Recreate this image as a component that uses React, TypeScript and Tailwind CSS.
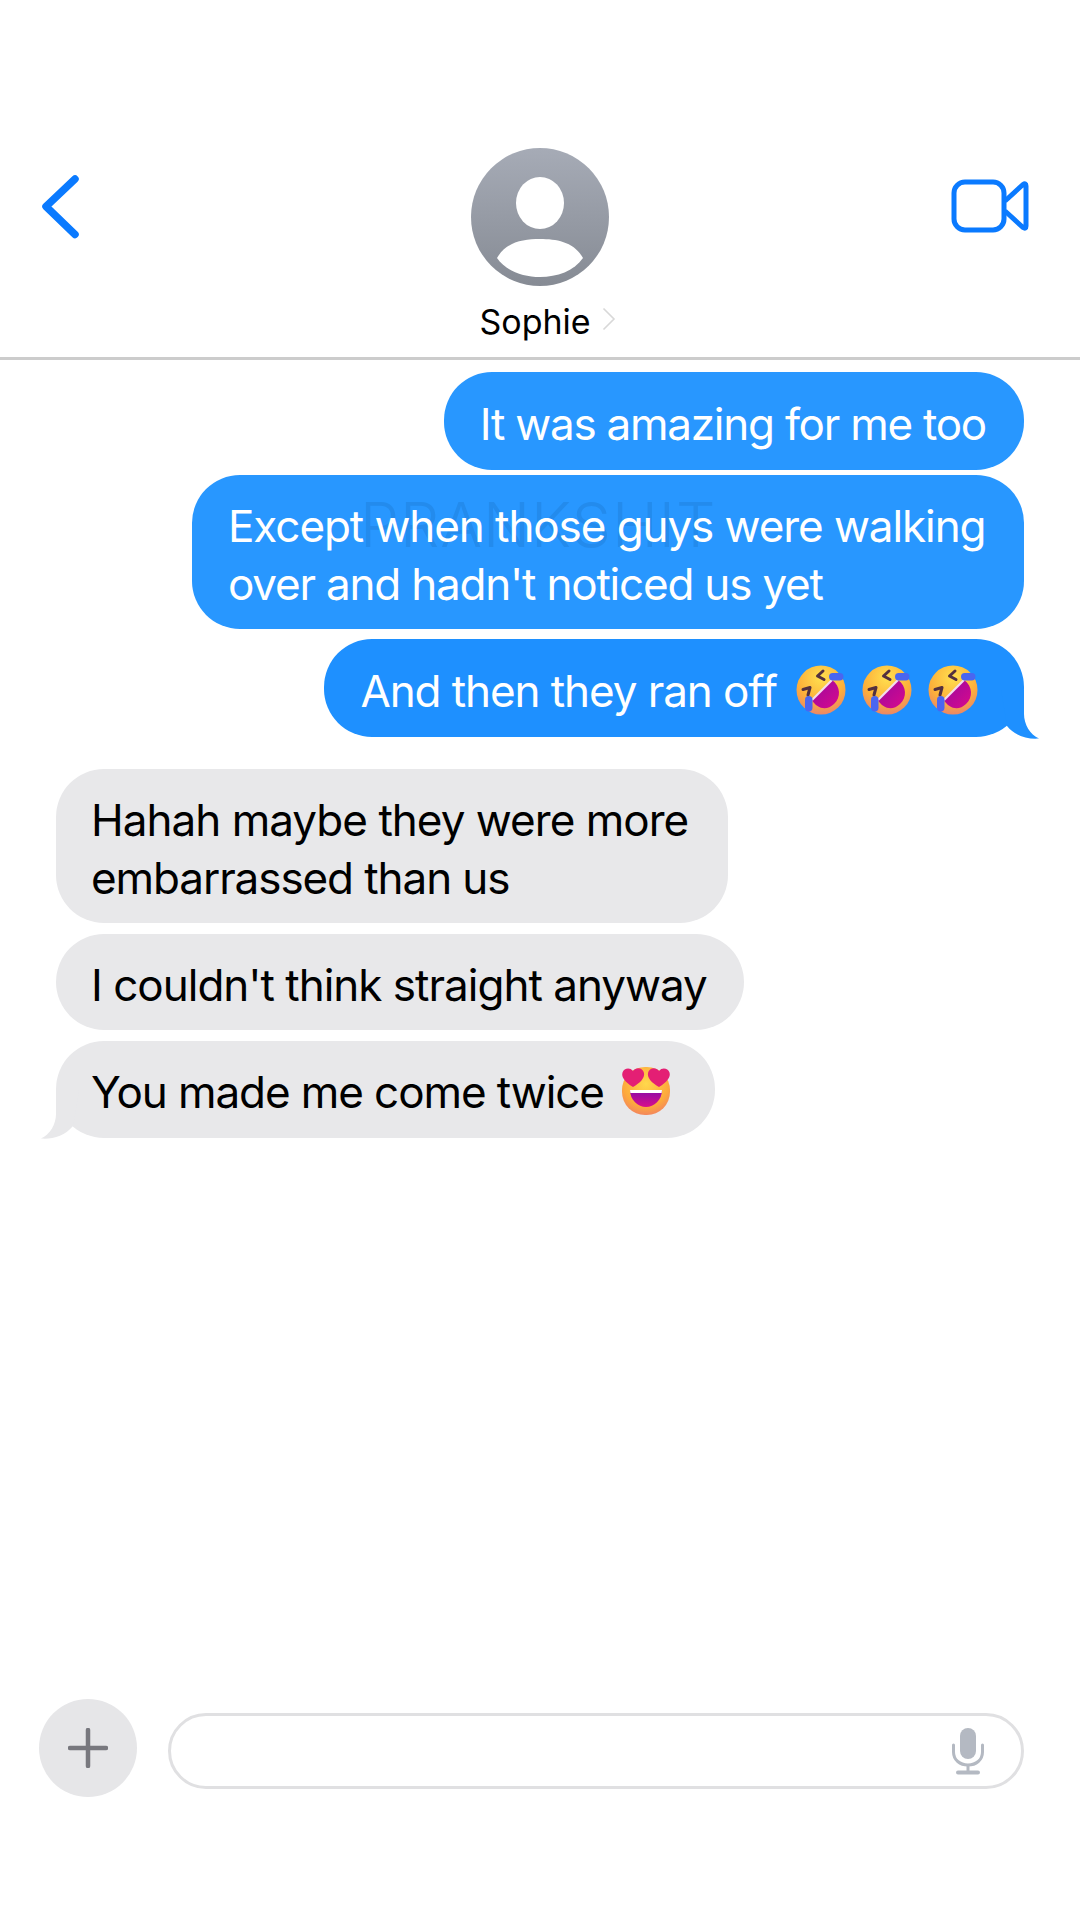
import React from "react";

function Rofl({ id }: { id: string }) {
  return (
    <svg width="50" height="50" viewBox="0 0 50 50" className="shrink-0">
      <defs>
        <radialGradient id={`f${id}`} cx="0.5" cy="0.25" r="0.8">
          <stop offset="0" stopColor="#ffe04f" />
          <stop offset="0.6" stopColor="#fdb03a" />
          <stop offset="1" stopColor="#e8806e" />
        </radialGradient>
        <linearGradient id={`m${id}`} x1="0" y1="0" x2="1" y2="1">
          <stop offset="0" stopColor="#9a08a0" />
          <stop offset="1" stopColor="#d80a8c" />
        </linearGradient>
      </defs>
      <circle cx="25" cy="25" r="24.5" fill={`url(#f${id})`} />
      <path d="M36 15 C45 21 45 33 38 39 C31 46 21 44 16 35 Z" fill={`url(#m${id})`} />
      <path d="M16 35 L36 15" stroke="#f3dcef" strokeWidth="2.2" />
      <path d="M27 6 L21.5 11 L28 14.5" fill="none" stroke="#53303f" strokeWidth="3" strokeLinecap="round" strokeLinejoin="round" />
      <path d="M7 24.5 L14 22.5 L12 30" fill="none" stroke="#53303f" strokeWidth="3" strokeLinecap="round" strokeLinejoin="round" />
      <rect x="33" y="8" width="14.5" height="7.5" rx="3.7" fill="#4a66f0" />
      <rect x="9" y="31" width="7.5" height="15.5" rx="3.7" fill="#4a66f0" />
    </svg>
  );
}

function HeartEyes() {
  return (
    <svg width="50" height="50" viewBox="0 0 50 50" className="shrink-0">
      <defs>
        <radialGradient id="hf" cx="0.5" cy="0.35" r="0.72">
          <stop offset="0" stopColor="#ffd84c" />
          <stop offset="0.65" stopColor="#fdaa3c" />
          <stop offset="1" stopColor="#f07a68" />
        </radialGradient>
        <linearGradient id="hm" x1="0" y1="0" x2="0" y2="1">
          <stop offset="0" stopColor="#8a0ca8" />
          <stop offset="1" stopColor="#d80d8c" />
        </linearGradient>
      </defs>
      <rect x="1" y="1" width="48" height="48" rx="23" fill="url(#hf)" />
      <path d="M9 24 H41 C41 34 33 41 25 41 C17 41 9 34 9 24 Z" fill="url(#hm)" />
      <path d="M9 24 H41 L40.6 27 H9.4 Z" fill="#ffffff" />
      <path d="M12 21 C4 16 0 11 1.5 6.5 C3 2 9 1 12 5 C15 0.5 22 1.5 23 7 C24 12 19 17 12 21 Z" fill="#e41f74" />
      <path d="M38 21 C31 17 26 12 27 7 C28 1.5 35 0.5 38 5 C41 1 47 2 48.5 6.5 C50 11 46 16 38 21 Z" fill="#e41f74" />
    </svg>
  );
}

const sent = "bg-[#2897ff] text-white self-end rounded-[48px] pl-[36px] pr-[38px] pt-[23px] pb-[17px]";
const recv = "bg-[#e8e8ea] text-black self-start rounded-[48px] pl-[35px] pt-[22px] pb-[16px]";

export default function App() {
  return (
    <div className="w-[1080px] h-[1920px] bg-white flex flex-col overflow-hidden font-['Inter','Liberation_Sans',sans-serif] text-[44px] leading-[58px] tracking-[-1.08px]">
      {/* Header */}
      <header className="h-[360px] pt-[148px] border-b-[3px] border-[#cccccc] flex items-start px-[41px]">
        <div className="flex-1 flex justify-start">
          <svg width="38" height="64" viewBox="0 0 38 64" className="mt-[27px]">
            <path d="M34 4 L5 31.5 L34 59.5" fill="none" stroke="#0a7aff" strokeWidth="7.5" strokeLinecap="round" strokeLinejoin="round" />
          </svg>
        </div>
        <div className="flex flex-col items-center">
          <svg width="138" height="138" viewBox="0 0 138 138">
            <defs>
              <linearGradient id="av" x1="0" y1="0" x2="0" y2="1">
                <stop offset="0" stopColor="#a6abb6" />
                <stop offset="1" stopColor="#868b94" />
              </linearGradient>
            </defs>
            <circle cx="69" cy="69" r="69" fill="url(#av)" />
            <ellipse cx="69" cy="55" rx="24" ry="26" fill="#fff" />
            <path d="M26 110 C35 94 52 91 69 91 C86 91 103 94 112 110 C103 123 86 129 69 129 C52 129 35 123 26 110 Z" fill="#fff" />
          </svg>
          <div className="flex items-center mt-[15px] ml-[16px] h-[42px]">
            <span className="text-[34px] leading-[42px] tracking-[-0.05px] text-black">Sophie</span>
            <svg width="14" height="24" viewBox="0 0 14 24" className="ml-[12px] -mt-[6px]">
              <path d="M1.5 1.5 L12 12 L1.5 22.5" fill="none" stroke="#d8d8d8" strokeWidth="1.6" />
            </svg>
          </div>
        </div>
        <div className="flex-1 flex justify-end">
          <svg width="78" height="54" viewBox="0 0 78 54" className="mt-[31px] mr-[10px]">
            <rect x="3" y="3" width="50" height="48" rx="11" fill="none" stroke="#0a7aff" strokeWidth="5" />
            <path d="M54 22 L72 5.5 Q75 3.5 75 7 V47 Q75 50.5 72 48.5 L54 32" fill="none" stroke="#0a7aff" strokeWidth="5" strokeLinejoin="round" />
          </svg>
        </div>
      </header>

      {/* Messages */}
      <main className="flex-1 flex flex-col pt-[12px] pl-[56px] pr-[56px]">
        <div className={`${sent} tracking-[-1.25px]`}>It was amazing for me too</div>
        <div className={`${sent} relative mt-[5px] !pt-[22px] !pb-[16px] w-[832px]`}>
          <span className="absolute left-[168px] top-[20px] text-[62px] leading-[60px] tracking-[1px] font-light text-[#1f80dc] opacity-50">PRANKSHIT</span>
          <span className="relative block">Except when those guys were walking<br /><span className="tracking-[-1.2px]">over and hadn't noticed us yet</span></span>
        </div>
        <div className={`${sent} relative mt-[10px] !bg-[#1e90ff] !pr-[46px] flex items-center tracking-[-1.08px]`}>
          <span>And then they ran off</span>
          <span className="flex gap-[16px] ml-[19px] -mt-[3px]">
            <Rofl id="a" />
            <Rofl id="b" />
            <Rofl id="c" />
          </span>
          <svg width="40" height="50" viewBox="0 0 40 50" className="absolute -right-[16px] bottom-[-3px]">
            <path d="M24 0 V24 C24 34 30 45 39 48.5 C28 49.5 15 46 7 36 L1 0 Z" fill="#1e90ff" />
          </svg>
        </div>

        <div className={`${recv} mt-[32px] pr-[40px]`}><span className="tracking-[-0.97px]">Hahah maybe they were more</span><br />embarrassed than us</div>
        <div className={`${recv} mt-[11px] pr-[37px] tracking-[-1px]`}>I couldn't think straight anyway</div>
        <div className={`${recv} relative mt-[11px] !pb-[17px] pr-[36px] flex items-center`}>
          <span>You made me come twice</span>
          <span className="ml-[17px] mr-[8px] -mt-[3px]"><HeartEyes /></span>
          <svg width="40" height="50" viewBox="0 0 40 50" className="absolute -left-[16px] bottom-[-2px]">
            <path d="M16 0 V24 C16 34 10 45 1 48.5 C12 49.5 25 46 33 36 L39 0 Z" fill="#e8e8ea" />
          </svg>
        </div>
      </main>

      {/* Composer */}
      <footer className="h-[221px] flex items-start pl-[39px] pr-[56px]">
        <div className="w-[98px] h-[98px] rounded-full bg-[#e6e6e8] flex items-center justify-center">
          <svg width="40" height="40" viewBox="0 0 40 40">
            <path d="M20 2 V38 M2 20 H38" stroke="#78787e" strokeWidth="4.5" strokeLinecap="round" />
          </svg>
        </div>
        <div className="ml-[31px] mt-[14px] flex-1 h-[76px] rounded-full border-[3px] border-[#e0e0e2] flex items-center justify-end pr-[36px]">
          <svg width="34" height="48" viewBox="0 0 34 48">
            <rect x="9" y="1" width="16" height="31" rx="8" fill="#b4b9c2" />
            <path d="M2.5 18 V25 C2.5 33 9 38 17 38 C25 38 31.5 33 31.5 25 V18" fill="none" stroke="#b4b9c2" strokeWidth="3" strokeLinecap="round" />
            <path d="M17 38 V45" stroke="#b4b9c2" strokeWidth="3" />
            <path d="M7 45.5 H27" stroke="#b4b9c2" strokeWidth="4" strokeLinecap="round" />
          </svg>
        </div>
      </footer>
    </div>
  );
}
